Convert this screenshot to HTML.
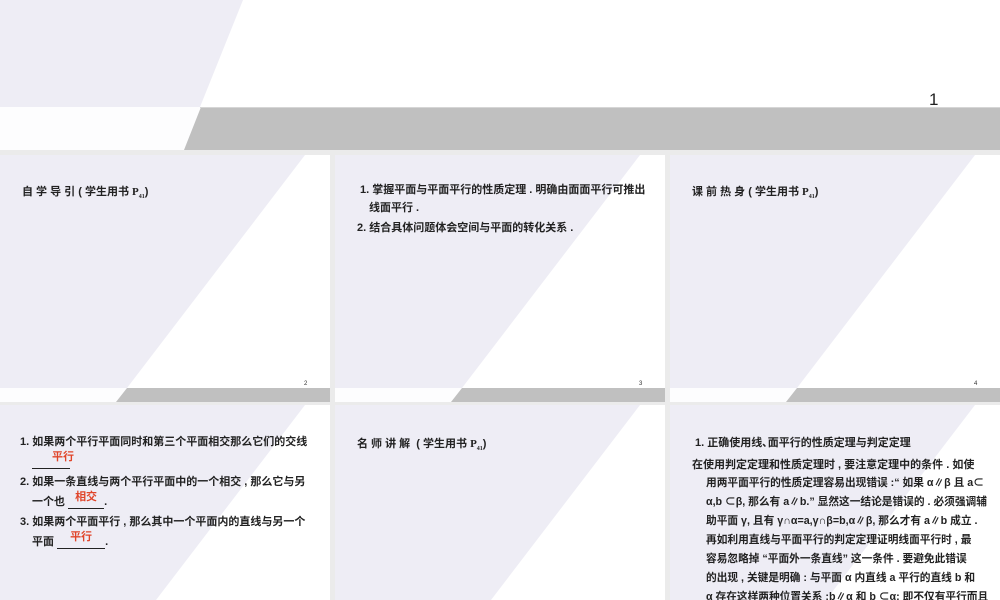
<!DOCTYPE html>
<html style="width:1000px;height:600px;overflow:hidden"><head><meta charset="utf-8"><style>
body{margin:0;width:1000px;height:600px;overflow:hidden;background:#ebebeb;position:relative;font-family:"Liberation Sans","Noto Sans CJK SC",sans-serif;}
.s{position:absolute;width:330px;height:247px;overflow:hidden}
.s svg{position:absolute;left:0;top:0}
.t{position:absolute;font-size:11px;font-weight:bold;color:#222;white-space:nowrap;line-height:14px}
.n{position:absolute;font-size:6px;color:#333;left:304px;top:226px}
.u{display:inline-block;border-bottom:1px solid #222;position:relative;height:12px;vertical-align:bottom}
.u span{position:absolute;left:0;right:0;top:-6px;text-align:center;color:#e0452a;font-size:11px}
sub{font-size:6px}
</style></head><body>
<svg style="position:absolute;left:0;top:0" width="1000" height="150">
<rect width="1000" height="107" fill="#fff"/>
<polygon points="0,0 243,0 200,107 0,107" fill="#eeedf5"/>
<rect y="107" width="1000" height="43" fill="#fdfdfe"/>
<polygon points="201,107 1000,107 1000,150 184,150" fill="#c0c0c0"/>
<line x1="200" y1="107.5" x2="1000" y2="107.5" stroke="#d6d6d6"/>
</svg>
<div style="position:absolute;left:929px;top:90px;font-size:17px;color:#222">1</div>

<div class="s" style="left:0;top:155px"><svg width="330" height="247"><rect width="330" height="247" fill="#fff"/><polygon points="0,0 305,0 127,233 0,233" fill="#eeedf5"/><rect y="233" width="330" height="14" fill="#fdfdfe"/><polygon points="127,233 330,233 330,247 116,247" fill="#c0c0c0"/></svg>
<div class="t" style="left:22px;top:30px">自 学 导 引 ( 学生用书 <span style="font-family:'Liberation Serif'">P<sub>41</sub></span>)</div><div class="n">2</div></div>

<div class="s" style="left:335px;top:155px"><svg width="330" height="247"><rect width="330" height="247" fill="#fff"/><polygon points="0,0 305,0 127,233 0,233" fill="#eeedf5"/><rect y="233" width="330" height="14" fill="#fdfdfe"/><polygon points="127,233 330,233 330,247 116,247" fill="#c0c0c0"/></svg>
<div class="t" style="left:25px;top:28px">1. 掌握平面与平面平行的性质定理 . 明确由面面平行可推出</div>
<div class="t" style="left:34px;top:46px">线面平行 .</div>
<div class="t" style="left:22px;top:66px">2. 结合具体问题体会空间与平面的转化关系 .</div><div class="n">3</div></div>

<div class="s" style="left:670px;top:155px"><svg width="330" height="247"><rect width="330" height="247" fill="#fff"/><polygon points="0,0 305,0 127,233 0,233" fill="#eeedf5"/><rect y="233" width="330" height="14" fill="#fdfdfe"/><polygon points="127,233 330,233 330,247 116,247" fill="#c0c0c0"/></svg>
<div class="t" style="left:22px;top:30px">课 前 热 身 ( 学生用书 <span style="font-family:'Liberation Serif'">P<sub>41</sub></span>)</div><div class="n">4</div></div>

<div class="s" style="left:0;top:405px;height:195px"><svg width="330" height="247"><rect width="330" height="247" fill="#fff"/><polygon points="0,0 305,0 127,233 0,233" fill="#eeedf5"/></svg>
<div class="t" style="left:20px;top:30px">1. 如果两个平行平面同时和第三个平面相交那么它们的交线</div>
<div class="t" style="left:32px;top:50px"><span class="u" style="width:38px"><span style="left:20px;right:auto">平行</span></span></div>
<div class="t" style="left:20px;top:70px">2. 如果一条直线与两个平行平面中的一个相交 , 那么它与另</div>
<div class="t" style="left:32px;top:90px">一个也 <span class="u" style="width:36px"><span>相交</span></span>.</div>
<div class="t" style="left:20px;top:110px">3. 如果两个平面平行 , 那么其中一个平面内的直线与另一个</div>
<div class="t" style="left:32px;top:130px">平面 <span class="u" style="width:48px"><span>平行</span></span>.</div></div>

<div class="s" style="left:335px;top:405px;height:195px"><svg width="330" height="247"><rect width="330" height="247" fill="#fff"/><polygon points="0,0 305,0 127,233 0,233" fill="#eeedf5"/></svg>
<div class="t" style="left:22px;top:32px">名 师 讲 解 &nbsp;( 学生用书 <span style="font-family:'Liberation Serif'">P<sub>41</sub></span>)</div></div>

<div class="s" style="left:670px;top:405px;height:195px"><svg width="330" height="247"><rect width="330" height="247" fill="#fff"/><polygon points="0,0 305,0 127,233 0,233" fill="#eeedf5"/></svg>
<div class="t" style="left:25px;top:31px">1. 正确使用线､面平行的性质定理与判定定理</div>
<div class="t" style="left:22px;top:53px">在使用判定定理和性质定理时 , 要注意定理中的条件 . 如使</div>
<div class="t" style="left:36px;top:71px;font-size:10.7px">用两平面平行的性质定理容易出现错误 :“ 如果 α∥β 且 a⊂</div>
<div class="t" style="left:36px;top:90px;font-size:10.7px">α,b ⊂β, 那么有 a∥b.” 显然这一结论是错误的 . 必须强调辅</div>
<div class="t" style="left:36px;top:109px;font-size:10.7px">助平面 γ, 且有 γ∩α=a,γ∩β=b,α∥β, 那么才有 a∥b 成立 .</div>
<div class="t" style="left:36px;top:128px;font-size:10.7px">再如利用直线与平面平行的判定定理证明线面平行时 , 最</div>
<div class="t" style="left:36px;top:147px;font-size:10.7px">容易忽略掉 “平面外一条直线” 这一条件 . 要避免此错误</div>
<div class="t" style="left:36px;top:166px;font-size:10.7px">的出现 , 关键是明确 : 与平面 α 内直线 a 平行的直线 b 和</div>
<div class="t" style="left:36px;top:185px;font-size:10.7px">α 存在这样两种位置关系 :b∥α 和 b ⊂α; 即不仅有平行而且</div></div>
</body></html>
